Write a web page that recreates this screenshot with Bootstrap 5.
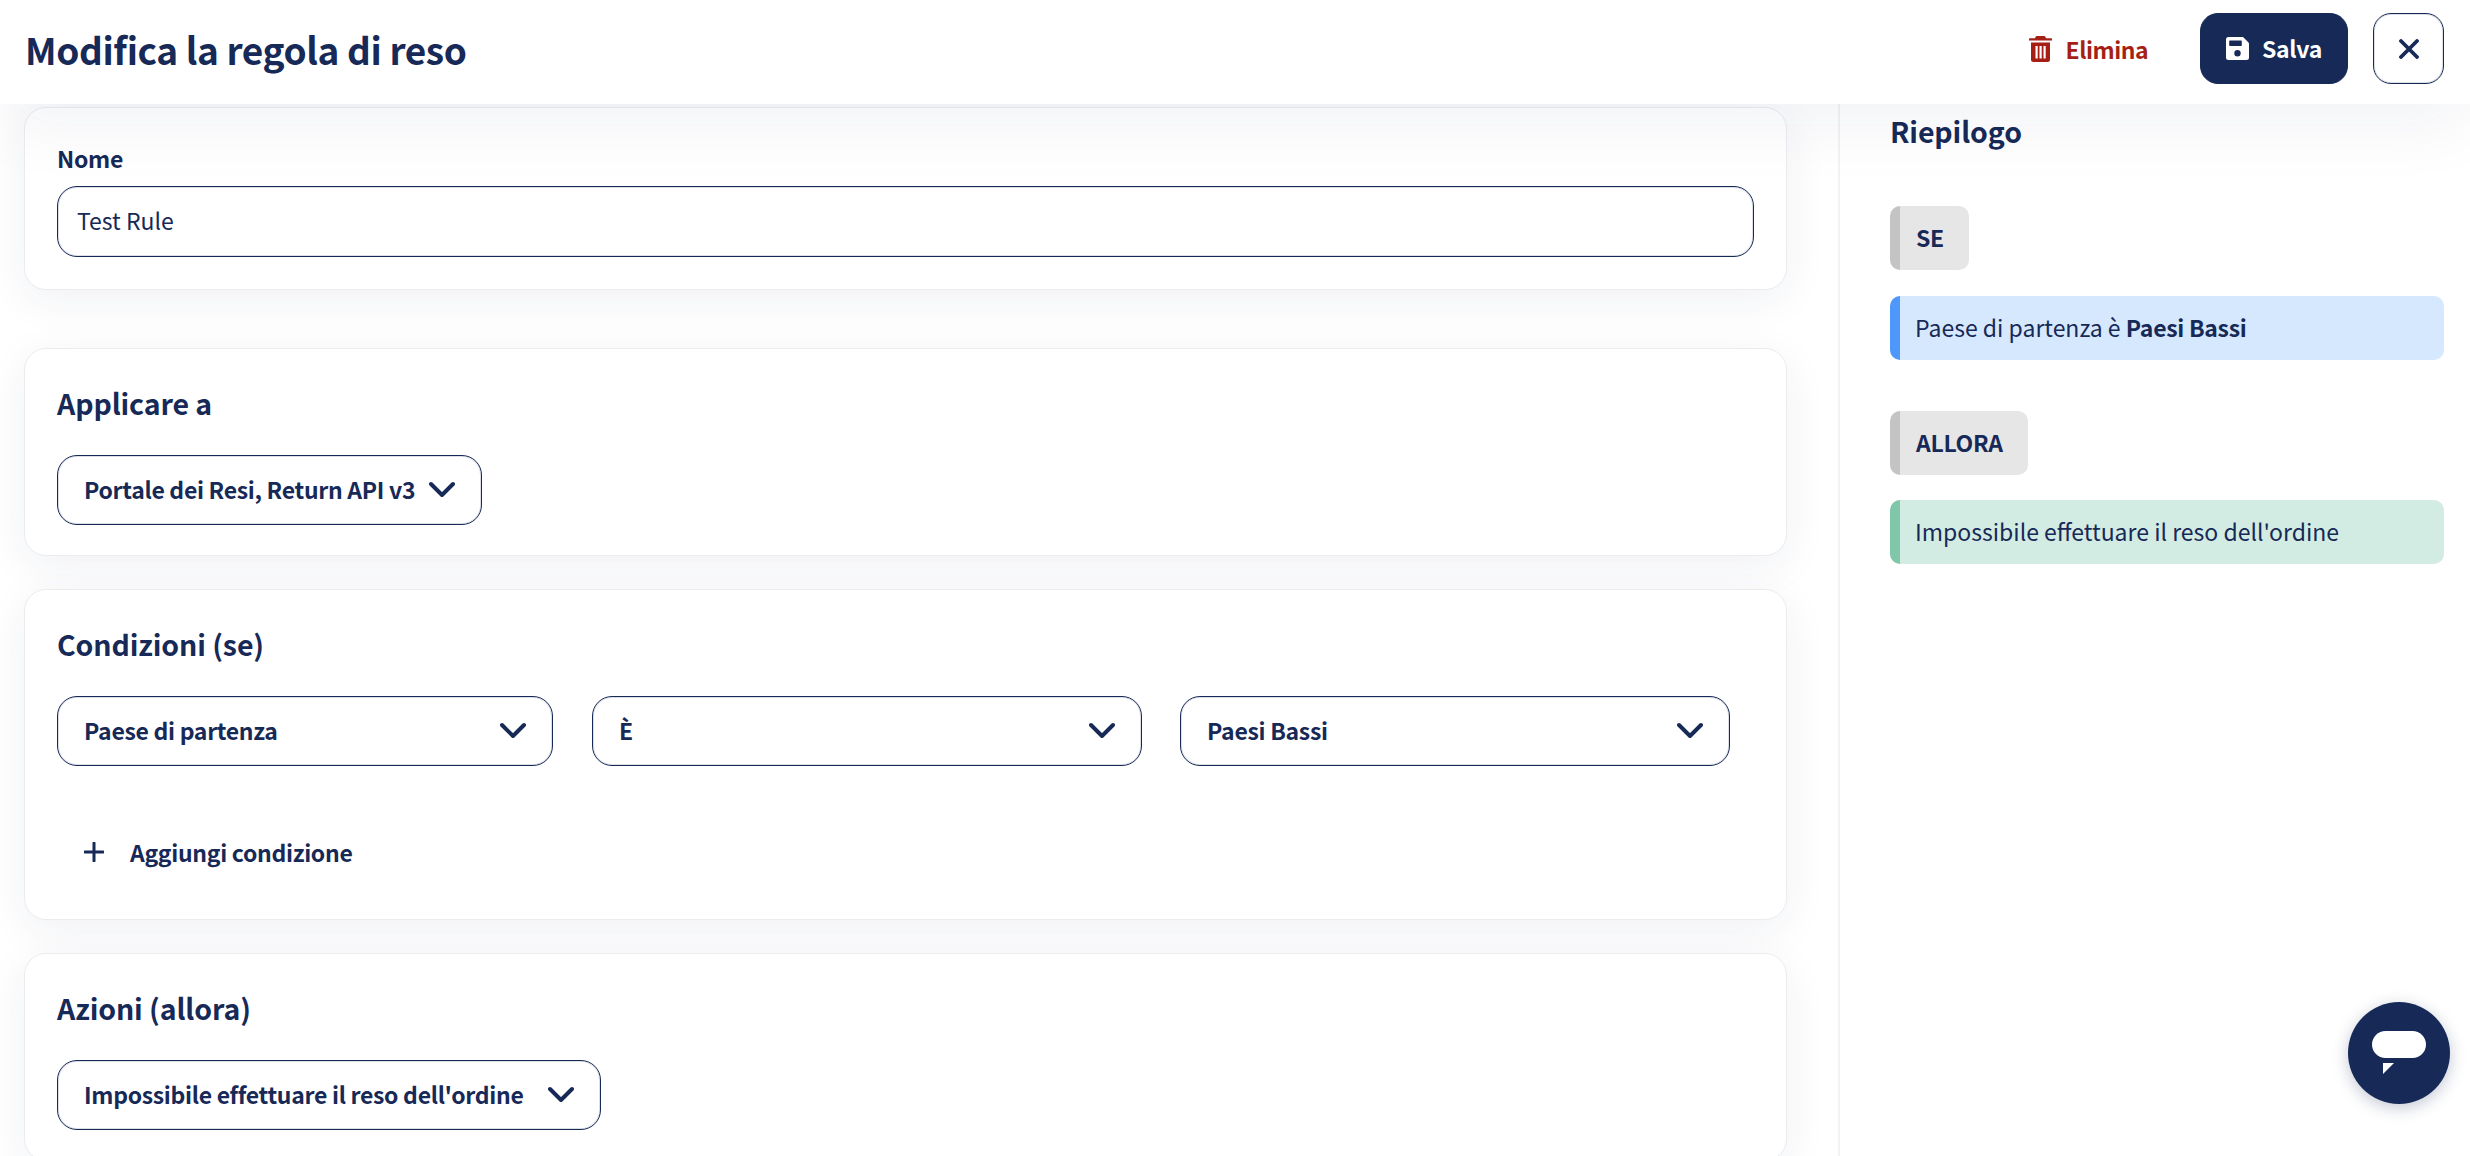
<!DOCTYPE html>
<html lang="it">
<head>
<meta charset="utf-8">
<title>Modifica la regola di reso</title>
<link rel="stylesheet" href="https://cdn.jsdelivr.net/npm/bootstrap@5.3.0/dist/css/bootstrap.min.css">
<style>
html,body{height:1156px;overflow:hidden}
body{font-family:"Noto Sans CJK SC","Source Sans Pro","Noto Sans",sans-serif;font-size:23px;line-height:36px;color:#172957;background:#fff}
strong,.semi{font-size:23px;letter-spacing:-.3px;font-weight:700}
.top-bar{height:104px;padding:0 26px 7px 25px;background:#fff;box-shadow:0 20px 70px rgba(23,41,87,.06);position:relative;z-index:2}
.page-title{font-size:37px;line-height:48px;font-weight:700;letter-spacing:-.38px;margin:0;color:#172957}
.del-btn{line-height:36px;color:#a61f14;padding:0;border:0;background:none;margin-right:52px;gap:14px;letter-spacing:-.5px}
.del-btn:hover{color:#a61f14}
.save-btn{width:148px;height:71px;border-radius:18px;background:#172957;border-color:#172957;color:#fff;gap:13px;padding:0;margin-right:25px}
.save-btn:hover{background:#172957;color:#fff}
.close-btn{width:71px;height:71px;border-radius:18px;border:1px solid #172957;box-shadow:inset 0 0 0 1px rgba(23,41,87,.15);background:#fff;padding:0}
.page-main{height:1052px}
.left-pane{width:1838px;padding:3px 51px 0 24px;overflow:hidden;flex:none}
.rule-card{border:1px solid #ececef;border-radius:22px;box-shadow:0 10px 44px rgba(23,41,87,.065);margin-bottom:33px;background:#fff;--bs-card-bg:#fff}
.rule-card .card-body{padding:32px 32px 30px}
.first-card{margin-bottom:58px}
.first-card .card-body{padding:32px 32px 32px}
.fld-label{line-height:36px;margin:0 0 10px;display:block;color:#172957}
.fld-input{height:71px;border:1px solid #172957;border-radius:20px;font-size:23px;color:#172957;padding:0 19px 3px;box-shadow:inset 0 0 0 1px rgba(23,41,87,.15)}
.fld-input:focus{border-color:#172957;box-shadow:inset 0 0 0 1px rgba(23,41,87,.15)}
.sec-title{font-size:28.5px;line-height:44px;font-weight:700;letter-spacing:-.1px;margin:0 0 30px;color:#172957}
.sel-btn{height:70px;border:1px solid #172957;border-radius:20px;box-shadow:inset 0 0 0 1px rgba(23,41,87,.15);background:#fff;color:#172957;line-height:36px;padding:0 26px 3px;display:flex;align-items:center;justify-content:space-between;text-align:left;white-space:nowrap}
.sel-btn:hover{background:#fff;color:#172957;border-color:#172957}
.sel-a{width:425px}
.sel-b{width:496px}
.sel-c{width:550px}
.sel-d{width:544px}
.cond-row{gap:38px}
.cond-row .sel-b{margin-right:1px}
.add-link{line-height:36px;color:#172957;gap:26px;margin:68px 0 19px 27px;padding:0;border:0;background:none}
.add-link:hover{color:#172957}
.side-pane{flex:1;border-left:2px solid #f3f3f5;padding:0 26px 0 50px;background:#fff}
.side-title{font-size:28.5px;line-height:44px;font-weight:700;letter-spacing:-.1px;margin:5px 0 53px;color:#172957}
.sum-tag{display:inline-flex;align-items:center;height:64px;padding:0 25px 3px 16px;border-left:10px solid #c4c4c4;border-radius:10px;background:#e6e6e6;color:#172957}
.sum-line{display:flex;align-items:center;height:64px;padding:0 15px 3px;border-left:10px solid;border-radius:10px;color:#172957}
.sum-blue{background:#d6e8fe;border-color:#4e97fb;margin:26px 0 51px}
.sum-green{background:#d3ece3;border-color:#80c7a9;margin:25px 0 0}
.sum-block{display:block;line-height:0}
.chat-bubble{position:fixed;left:2348px;top:1002px;width:102px;height:102px;border-radius:50%;background:#172957;box-shadow:0 4px 16px rgba(23,41,87,.25);display:flex;align-items:center;justify-content:center;border:0;padding:0;z-index:3}
</style>
</head>
<body>
<header class="top-bar d-flex align-items-center">
  <h1 class="page-title flex-grow-1">Modifica la regola di reso</h1>
  <button type="button" class="btn semi del-btn d-flex align-items-center">
    <svg width="23" height="26" viewBox="0 0 23 26" fill="#a61f14" aria-hidden="true"><path fill-rule="evenodd" d="M8 0h7a1.600 1.600 0 0 1 1.500 1L17 2.200h5.200a.8.8 0 0 1 .8.8v1.600H0V3a.8.8 0 0 1 .8-.8H6l.5-1.200A1.600 1.600 0 0 1 8 0zM2 6.500h19v17A2.500 2.500 0 0 1 18.500 26h-14A2.500 2.500 0 0 1 2 23.500zM6.500 10v12.500h2.200V10zm4 0v12.500h2.200V10zm4 0v12.500h2.200V10z"/></svg>
    <span>Elimina</span>
  </button>
  <button type="button" class="btn save-btn semi d-flex align-items-center justify-content-center">
    <svg width="23" height="23" viewBox="0 0 23 23" fill="#fff" aria-hidden="true"><path fill-rule="evenodd" d="M2.500 0H17l5.300 5.300c.5.500.7 1 .7 1.700v13.500a2.500 2.500 0 0 1-2.500 2.500h-18A2.500 2.500 0 0 1 0 20.500v-18A2.500 2.500 0 0 1 2.500 0zM4 3.500a.8.8 0 0 0-.8.8v3.900c0 .4.400.8.800.8h11c.4 0 .8-.4.800-.8V4.300a.8.8 0 0 0-.8-.8zM11.500 13a3.200 3.200 0 1 0 0 6.400 3.200 3.200 0 0 0 0-6.400z"/></svg>
    <span>Salva</span>
  </button>
  <button type="button" class="btn close-btn d-flex align-items-center justify-content-center" aria-label="Chiudi">
    <svg width="20" height="20" viewBox="0 0 20 20" fill="none" stroke="#172957" stroke-width="3.800" stroke-linecap="round"><path d="M2 2l16 16M18 2L2 18"/></svg>
  </button>
</header>
<div class="page-main d-flex">
  <main class="left-pane">
    <section class="card rule-card first-card">
      <div class="card-body">
        <label class="fld-label semi" for="nome">Nome</label>
        <input id="nome" class="form-control fld-input" type="text" value="Test Rule">
      </div>
    </section>
    <section class="card rule-card">
      <div class="card-body">
        <h2 class="sec-title">Applicare a</h2>
        <button type="button" class="btn sel-btn semi sel-a">
          <span>Portale dei Resi, Return API v3</span>
          <svg width="26" height="16" viewBox="0 0 26 16" fill="none" stroke="#172957" stroke-width="4" stroke-linecap="round" stroke-linejoin="round"><path d="M2 3l11 11L24 3"/></svg>
        </button>
      </div>
    </section>
    <section class="card rule-card">
      <div class="card-body">
        <h2 class="sec-title">Condizioni (se)</h2>
        <div class="d-flex cond-row">
          <button type="button" class="btn sel-btn semi sel-b">
            <span>Paese di partenza</span>
            <svg width="26" height="16" viewBox="0 0 26 16" fill="none" stroke="#172957" stroke-width="4" stroke-linecap="round" stroke-linejoin="round"><path d="M2 3l11 11L24 3"/></svg>
          </button>
          <button type="button" class="btn sel-btn semi sel-c">
            <span>È</span>
            <svg width="26" height="16" viewBox="0 0 26 16" fill="none" stroke="#172957" stroke-width="4" stroke-linecap="round" stroke-linejoin="round"><path d="M2 3l11 11L24 3"/></svg>
          </button>
          <button type="button" class="btn sel-btn semi sel-c">
            <span>Paesi Bassi</span>
            <svg width="26" height="16" viewBox="0 0 26 16" fill="none" stroke="#172957" stroke-width="4" stroke-linecap="round" stroke-linejoin="round"><path d="M2 3l11 11L24 3"/></svg>
          </button>
        </div>
        <button type="button" class="btn add-link semi d-flex align-items-center">
          <svg width="20" height="20" viewBox="0 0 20 20" fill="none" stroke="#172957" stroke-width="3" stroke-linecap="round"><path d="M10 1v18M1 10h18"/></svg>
          <span>Aggiungi condizione</span>
        </button>
      </div>
    </section>
    <section class="card rule-card">
      <div class="card-body">
        <h2 class="sec-title">Azioni (allora)</h2>
        <button type="button" class="btn sel-btn semi sel-d">
          <span>Impossibile effettuare il reso dell'ordine</span>
          <svg width="26" height="16" viewBox="0 0 26 16" fill="none" stroke="#172957" stroke-width="4" stroke-linecap="round" stroke-linejoin="round"><path d="M2 3l11 11L24 3"/></svg>
        </button>
      </div>
    </section>
  </main>
  <aside class="side-pane">
    <h2 class="side-title">Riepilogo</h2>
    <div class="sum-block"><span class="sum-tag semi">SE</span></div>
    <div class="sum-line sum-blue"><span>Paese di partenza è <strong>Paesi Bassi</strong></span></div>
    <div class="sum-block"><span class="sum-tag semi">ALLORA</span></div>
    <div class="sum-line sum-green"><span>Impossibile effettuare il reso dell'ordine</span></div>
  </aside>
</div>
<button type="button" class="chat-bubble" aria-label="Chat">
  <svg width="54" height="44" viewBox="0 0 54 44" fill="#fff"><rect x="0" y="0" width="54" height="27" rx="13.500"/><path d="M11 32h11L11 43z"/></svg>
</button>
<script src="https://cdn.jsdelivr.net/npm/bootstrap@5.3.0/dist/js/bootstrap.bundle.min.js"></script>
</body>
</html>
